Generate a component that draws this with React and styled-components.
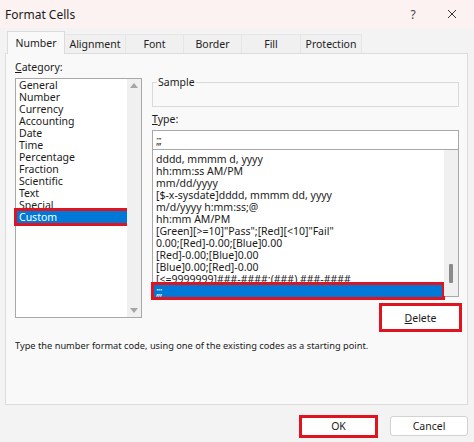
import styled, { createGlobalStyle } from "styled-components";

const Global = createGlobalStyle`
    body {
        margin: 0;
        background: #f3f3f3;
        font-family: "Noto Sans", "Open Sans", sans-serif;
        color: #1a1a1a;
    }
`
const Dialog = styled.div`
    width: 474px;
    height: 442px;
    display: flex;
    flex-direction: column;
    background: #f3f3f3;
    overflow: hidden;
`
const TitleBar = styled.div`
    height: 28px;
    display: flex;
    align-items: center;
    padding: 0 12px 0 5px;
    background: #fcf2f1;
    font-size: 12px;
`
const Title = styled.div`
    flex: 1;
`
const TitleBtn = styled.div`
    width: 20px;
    display: flex;
    justify-content: center;
    margin-left: ${p => p.ml || '0px'};
    color: #444;
    font-size: 12px;
`
const Tabs = styled.div`
    display: flex;
    align-items: flex-end;
    margin: 4px 0 0 7px;
    height: 21px;
`
const Tab = styled.div`
    height: ${p => p.active ? '22px' : '18px'};
    width: ${p => p.w};
    display: flex;
    align-items: center;
    justify-content: center;
    font-size: 10.5px;
    background: ${p => p.active ? '#f9f9f9' : '#f0f0f0'};
    border: 1px solid ${p => p.active ? '#dcdcdc' : '#e6e6e6'};
    border-bottom: none;
    border-left: ${p => p.active ? '1px solid #dcdcdc' : 'none'};
    margin-bottom: ${p => p.active ? '-1px' : '0'};
    position: relative;
    z-index: ${p => p.active ? 1 : 0};
    color: #222;
`
const Panel = styled.div`
    margin: 0 6px 0 5px;
    height: 352px;
    box-sizing: border-box;
    background: #f9f9f9;
    border: 1px solid #dcdcdc;
    padding: 6px 8px 0 9px;
    display: flex;
    flex-direction: column;
`
const Columns = styled.div`
    display: flex;
    gap: 10px;
`
const LeftCol = styled.div`
    width: 127px;
    display: flex;
    flex-direction: column;
`
const RightCol = styled.div`
    width: 307px;
    display: flex;
    flex-direction: column;
    padding-top: 17px;
`
const Label = styled.div`
    font-size: 10.5px;
    height: 14px;
    line-height: 14px;
    margin: ${p => p.m || '0'};
    u { text-decoration: underline; }
`
const ListBox = styled.div`
    height: ${p => p.h};
    box-sizing: border-box;
    border: 1px solid #a8a8a8;
    background: #fff;
    display: flex;
    margin-top: ${p => p.mt || '0'};
`
const Items = styled.div`
    flex: 1;
    padding: ${p => p.pad || '0 0 0 1px'};
    display: flex;
    flex-direction: column;
`
const Item = styled.div`
    height: 12px;
    line-height: 12px;
    font-size: 10.5px;
    padding-left: 2px;
    white-space: nowrap;
    background: ${p => p.selected ? '#0078d7' : 'transparent'};
    color: ${p => p.selected ? '#fff' : '#1a1a1a'};
    outline: ${p => p.selected ? '3px solid #e0141e' : 'none'};
    letter-spacing: ${p => p.ls || '0'};
`
const ScrollBar = styled.div`
    width: 14px;
    background: #f0f0f0;
    display: flex;
    flex-direction: column;
    justify-content: ${p => p.thumb ? 'flex-end' : 'space-between'};
    align-items: center;
    padding: ${p => p.thumb ? '0 0 13px' : '4px 0'};
`
const Arrow = styled.div`
    width: 0;
    height: 0;
    border-left: 4px solid transparent;
    border-right: 4px solid transparent;
    ${p => p.down ? 'border-top: 5px solid #a6a6a6;' : 'border-bottom: 5px solid #a6a6a6;'}
`
const Thumb = styled.div`
    width: 4px;
    height: 19px;
    background: #8a8a8a;
    border-radius: 1px;
`
const Group = styled.fieldset`
    margin: 0;
    padding: 0;
    height: 30px;
    box-sizing: border-box;
    border: 1px solid #dadada;
    legend {
        font-size: 10.5px;
        padding: 0 1px;
        margin-left: 4px;
        line-height: 10px;
    }
`
const TypeInput = styled.div`
    height: 19px;
    box-sizing: border-box;
    border: 1px solid #a8a8a8;
    border-bottom: none;
    background: #fff;
    font-size: 10px;
    padding: 2px 3px;
    color: #333;
    letter-spacing: -1px;
`
const ButtonRow = styled.div`
    display: flex;
    justify-content: flex-end;
    margin: ${p => p.m || '0'};
    gap: 12px;
`
const Button = styled.div`
    width: ${p => p.w || '78px'};
    height: ${p => p.h || '21px'};
    box-sizing: border-box;
    display: flex;
    align-items: center;
    justify-content: center;
    background: #fff;
    border: ${p => p.marked ? '3px solid #e0141e' : '1px solid #d2d2d2'};
    border-radius: ${p => p.marked ? '0' : '3px'};
    font-size: 10.5px;
    color: #1a1a1a;
    u { text-decoration: underline; }
`
const Hint = styled.div`
    font-size: 9.25px;
    margin-top: 7px;
    color: #1a1a1a;
`
const Footer = styled.div`
    flex: 1;
    display: flex;
    justify-content: flex-end;
    align-items: center;
    gap: 12px;
    padding: 5px 6px 0 0;
`

const categories = ['General', 'Number', 'Currency', 'Accounting', 'Date', 'Time', 'Percentage', 'Fraction', 'Scientific', 'Text', 'Special', 'Custom']
const formats = [
    'dddd, mmmm d, yyyy',
    'hh:mm:ss AM/PM',
    'mm/dd/yyyy',
    '[$-x-sysdate]dddd, mmmm dd, yyyy',
    'm/d/yyyy h:mm:ss;@',
    'hh:mm AM/PM',
    '[Green][>=10]"Pass";[Red][<10]"Fail"',
    '0.00;[Red]-0.00;[Blue]0.00',
    '[Red]-0.00;[Blue]0.00',
    '[Blue]0.00;[Red]-0.00',
    '[<=9999999]###-####;(###) ###-####',
]

export default function App() {
    return (
        <Dialog>
            <Global />
            <TitleBar>
                <Title>Format Cells</Title>
                <TitleBtn>?</TitleBtn>
                <TitleBtn ml="19px">
                    <svg width="10" height="10" viewBox="0 0 10 10">
                        <path d="M1 1L9 9M9 1L1 9" stroke="#333" strokeWidth="1" />
                    </svg>
                </TitleBtn>
            </TitleBar>
            <Tabs>
                <Tab active w="56px">Number</Tab>
                <Tab w="60px">Alignment</Tab>
                <Tab w="57px">Font</Tab>
                <Tab w="57px">Border</Tab>
                <Tab w="58px">Fill</Tab>
                <Tab w="60px">Protection</Tab>
            </Tabs>
            <Panel>
                <Columns>
                    <LeftCol>
                        <Label><u>C</u>ategory:</Label>
                        <ListBox h="240px" mt="4px">
                            <Items>
                                {categories.map(c => (
                                    <Item key={c} selected={c === 'Custom'}>{c}</Item>
                                ))}
                            </Items>
                            <ScrollBar>
                                <Arrow />
                                <Arrow down />
                            </ScrollBar>
                        </ListBox>
                    </LeftCol>
                    <RightCol>
                        <Group>
                            <legend>Sample</legend>
                        </Group>
                        <Label m="5px 0 4px"><u>T</u>ype:</Label>
                        <TypeInput>;;;</TypeInput>
                        <ListBox h="148px">
                            <Items pad="3px 2px 0 1px">
                                {formats.map(f => (
                                    <Item key={f}>{f}</Item>
                                ))}
                                <Item selected ls="-1px">;;;</Item>
                            </Items>
                            <ScrollBar thumb>
                                <Thumb />
                            </ScrollBar>
                        </ListBox>
                        <ButtonRow m="6px -3px 0 0">
                            <Button marked w="83px" h="29px"><span><u>D</u>elete</span></Button>
                        </ButtonRow>
                    </RightCol>
                </Columns>
                <Hint>Type the number format code, using one of the existing codes as a starting point.</Hint>
            </Panel>
            <Footer>
                <Button marked w="79px" h="23px">OK</Button>
                <Button w="78px" h="20px">Cancel</Button>
            </Footer>
        </Dialog>
    )
}
